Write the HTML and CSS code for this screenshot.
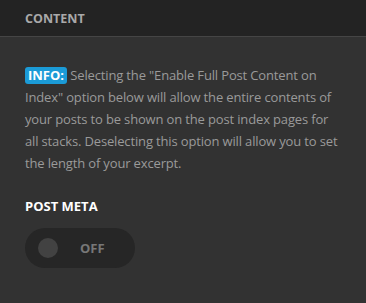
FILE: index.html
```html
<!DOCTYPE html>
<html>
<head>
<meta charset="utf-8">
<link rel="stylesheet" href="styles.css">
</head>
<body>
<div class="panel">
  <div class="panel-header">CONTENT</div>
  <div class="panel-body">
    <p class="info"><span class="badge">INFO:</span> Selecting the "Enable Full Post Content on Index" option below will allow the entire contents of your posts to be shown on the post index pages for all stacks. Deselecting this option will allow you to set the length of your excerpt.</p>
    <div class="label">POST META</div>
    <div class="toggle">
      <span class="knob"></span>
      <span class="toggle-text">OFF</span>
    </div>
  </div>
</div>
</body>
</html>
```
FILE: styles.css
```css
html, body {
  margin: 0;
  padding: 0;
  background: #323232;
}
body {
  font-family: "Open Sans", "Noto Sans", sans-serif;
  width: 366px;
  height: 303px;
  overflow: hidden;
}
.panel-header {
  height: 37px;
  box-sizing: border-box;
  background: #232323;
  border-bottom: 1px solid #454545;
  padding: 0 25px;
  display: flex;
  align-items: center;
  color: #a9a9a9;
  font-weight: 700;
  font-size: 12.5px;
}
.panel-body {
  padding: 27px 25px 0 25px;
}
.info {
  margin: 0;
  color: #9a9a9a;
  font-size: 13px;
  line-height: 22px;
  letter-spacing: -0.15px;
}
.badge {
  display: inline-block;
  background: #1b9bd7;
  color: #fff;
  font-weight: 700;
  border-radius: 3px;
  padding: 0 3px;
  line-height: 17px;
  letter-spacing: 0;
}
.label {
  margin-top: 23px;
  color: #fff;
  font-weight: 700;
  font-size: 13px;
  line-height: 18px;
}
.toggle {
  margin-top: 13px;
  width: 110px;
  height: 40px;
  border-radius: 20px;
  background: #262626;
  display: flex;
  align-items: center;
  padding-left: 13px;
  box-sizing: border-box;
}
.knob {
  width: 20px;
  height: 20px;
  border-radius: 50%;
  background: #424242;
}
.toggle-text {
  margin-left: 22px;
  color: #777;
  font-weight: 700;
  font-size: 13px;
}
```
